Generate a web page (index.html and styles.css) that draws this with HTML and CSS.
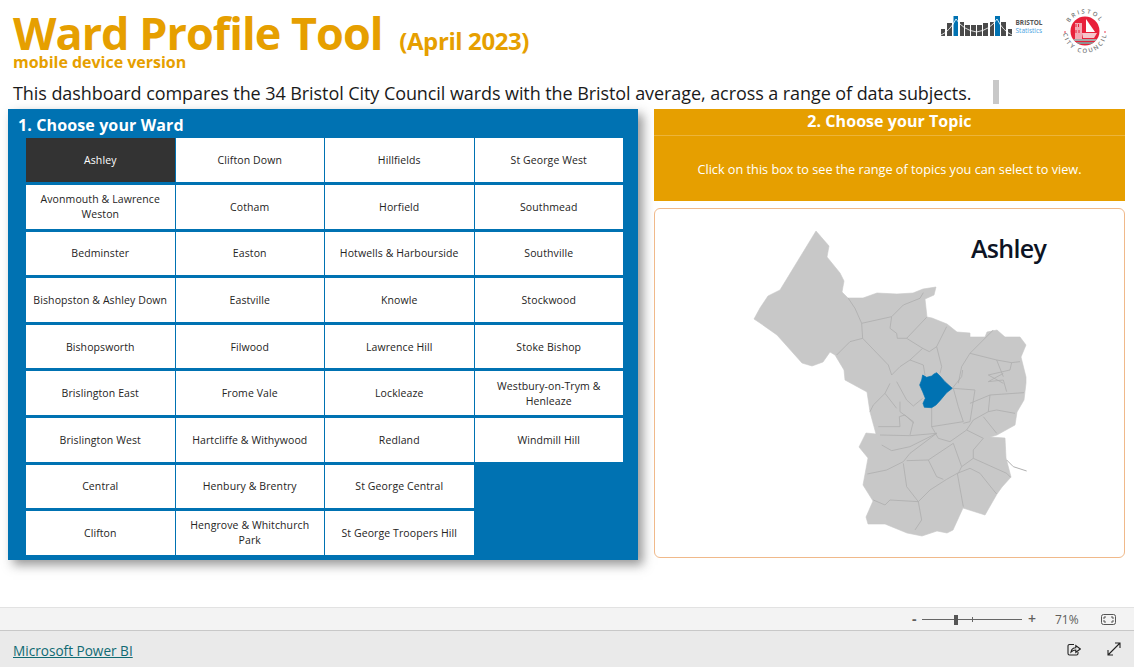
FILE: index.html
```html
<!DOCTYPE html>
<html lang="en">
<head>
<meta charset="utf-8">
<title>Ward Profile Tool</title>
<link rel="stylesheet" href="styles.css">
</head>
<body>
<div class="report">
  <header class="head">
    <div class="title-row">
      <div class="titles">
        <h1 class="title">Ward Profile Tool <span class="date">(April 2023)</span></h1>
        <div class="subtitle">mobile device version</div>
      </div>
      <div class="logos">
        <div class="stats-logo">
          <svg class="stats-bars" width="71" height="20" viewBox="0 0 71 20">
            <g fill="#4a4a4a">
              <rect x="0" y="13" width="4" height="7"/><rect x="6" y="7" width="5" height="13"/>
              <rect x="19" y="6" width="4" height="14"/><rect x="24" y="9" width="5" height="11"/><rect x="30" y="9" width="5" height="11"/><rect x="36" y="9" width="5" height="11"/><rect x="42" y="7" width="5" height="13"/><rect x="49" y="6" width="4" height="14"/>
              <rect x="60" y="6" width="5" height="14"/><rect x="67" y="13" width="4" height="7"/>
            </g>
            <g fill="#0072b2">
              <rect x="12.500" y="0" width="4.500" height="20"/><rect x="54" y="0" width="5" height="20"/>
            </g>
            <path d="M0 19 Q9 15 15 3 Q22 14 35.500 16 Q49 14 56 3 Q62 15 71 19" fill="none" stroke="#fff" stroke-width=".8"/>
          </svg>
          <div class="stats-text"><span class="stats-b">BRISTOL</span><span class="stats-s">Statistics</span></div>
        </div>
        <svg class="council" width="46" height="46" viewBox="0 0 46 46">
          <defs>
            <path id="ring-top" d="M5.500 23 A17.500 17.500 0 0 1 40.500 23"/>
            <path id="ring-bottom" d="M1 23 A22 22 0 0 0 45 23"/>
            <clipPath id="disc"><circle cx="23" cy="23" r="14.500"/></clipPath>
          </defs>
          <circle cx="23" cy="23" r="14.500" fill="#e8203a"/>
          <g clip-path="url(#disc)">
            <path d="M13 15 H20 V32 H13 Z" fill="#f3a9b4"/>
            <path d="M14 16 V19 M16.500 16 V19 M14 22 V25 M17 22 V25" stroke="#e8203a" stroke-width="1"/>
            <path d="M24 11 L33 24 H24 Z" fill="#fff"/>
            <path d="M20 25 H35 L32 30 H21 Z" fill="#f6c6cc"/>
            <rect x="9" y="31" width="28" height="2" fill="#a8a8a8"/>
            <rect x="9" y="34" width="28" height="2" fill="#8f8f8f"/>
          </g>
          <circle cx="3" cy="24" r=".8" fill="#e8203a"/><circle cx="43" cy="24" r=".8" fill="#e8203a"/>
          <text class="ring-text"><textPath href="#ring-top" startOffset="50%">BRISTOL</textPath></text>
          <text class="ring-text"><textPath href="#ring-bottom" startOffset="50%">CITY COUNCIL</textPath></text>
        </svg>
      </div>
    </div>
    <div class="intro-row">
      <p class="intro">This dashboard compares the 34 Bristol City Council wards with the Bristol average, across a range of data subjects.</p>
      <div class="scroll-mark"></div>
    </div>
  </header>

  <main class="main">
    <section class="ward-panel">
      <h2 class="ward-title">1. Choose your Ward</h2>
      <div class="ward-grid">
        <div class="ward selected">Ashley</div>
        <div class="ward">Avonmouth &amp; Lawrence Weston</div>
        <div class="ward">Bedminster</div>
        <div class="ward">Bishopston &amp; Ashley Down</div>
        <div class="ward">Bishopsworth</div>
        <div class="ward">Brislington East</div>
        <div class="ward">Brislington West</div>
        <div class="ward">Central</div>
        <div class="ward">Clifton</div>
        <div class="ward">Clifton Down</div>
        <div class="ward">Cotham</div>
        <div class="ward">Easton</div>
        <div class="ward">Eastville</div>
        <div class="ward">Filwood</div>
        <div class="ward">Frome Vale</div>
        <div class="ward">Hartcliffe &amp; Withywood</div>
        <div class="ward">Henbury &amp; Brentry</div>
        <div class="ward">Hengrove &amp; Whitchurch Park</div>
        <div class="ward">Hillfields</div>
        <div class="ward">Horfield</div>
        <div class="ward">Hotwells &amp; Harbourside</div>
        <div class="ward">Knowle</div>
        <div class="ward">Lawrence Hill</div>
        <div class="ward">Lockleaze</div>
        <div class="ward">Redland</div>
        <div class="ward">St George Central</div>
        <div class="ward">St George Troopers Hill</div>
        <div class="ward">St George West</div>
        <div class="ward">Southmead</div>
        <div class="ward">Southville</div>
        <div class="ward">Stockwood</div>
        <div class="ward">Stoke Bishop</div>
        <div class="ward">Westbury-on-Trym &amp; Henleaze</div>
        <div class="ward">Windmill Hill</div>
      </div>
    </section>

    <div class="right-col">
      <section class="topic">
        <h2 class="topic-title">2. Choose your Topic</h2>
        <p class="topic-text">Click on this box to see the range of topics you can select to view.</p>
      </section>
      <section class="map-card">
        <div class="map-name">Ashley</div>
        <svg class="map" viewBox="654 208 471 350">
          <path class="land" d="M816 231 829 246 827 257 840 273 844 281 842 292 848 298 863 298 877 293 897 294 913 293 923 289 936 287 934 295 925 299 927 317 932 318 947 324 957 332 970 333 970 337 985 337 987 332 997 330 1005 337 1020 337 1026 345 1021 357 1026 377 1026 383 1024 400 1017 412 1015 425 997 435 990 437 1005 438 1006 458 1011 477 1002 487 997 494 985 515 963 508 953 530 947 533 937 531 922 536 907 533 885 524 868 524 866 517 873 501 863 485 868 458 859 447 866 433 876 434 870 412 867 392 845 380 844 370 835 355 830 352 823 362 812 366 802 363 777 335 760 323 754 319 760 308 768 296 780 290Z"/>
          <g class="borders" transform="translate(740 220) scale(.3333)">
            <path d="M325 235 345 265 365 310 455 290M365 310 368 355 445 435 455 465M368 355 330 365 290 405M455 290 450 325 470 340 472 355 500 355 560 292M500 355 548 385 568 395 590 380 605 440 600 460M590 380 620 320M548 385 510 420 480 440 455 465M455 290 490 255 540 235 550 218M510 420 550 435 555 465M690 400 665 440 655 490M760 330 690 400 770 420 790 470M770 420 815 428 840 425M815 428 810 450 745 465 790 490"/>
          </g>
          <g class="borders" transform="translate(740 370) scale(.3333)">
            <path d="M450 40 435 70 400 105 390 125M435 70 470 115M470 35 500 90 520 108 548 85M480 95 480 125 520 155 510 195M415 170 480 170 478 140 495 135 522 160M420 195 510 197 590 190M425 225 455 242 510 230 590 190M382 312 440 300 490 275 510 250 590 190M490 280 500 350 535 395 450 390 435 405 400 390M535 395 545 450 525 480M535 395 570 360 620 328 652 310 670 410M500 272 565 270 590 320 610 328M565 270 640 220 665 290 655 310M652 310 690 295 720 310 760 360 770 372M665 290 700 265 800 310 812 322M575 113 575 170 595 205 630 215 680 180 730 205 700 240 700 265M640 55 655 110 670 155 575 170M640 55 705 60 690 155 670 160M690 100 750 75 745 125 700 150 680 180M750 75 852 68M745 125 770 120 825 130M730 140 770 190M800 65 790 30 745 35 790 10M637 55 665 20 668 0"/>
            <path class="river" d="M800 270 820 290 860 303"/>
            <path class="selected-ward" d="M548 15 560 22 575 18 582 12 590 8 600 18 615 35 637 55 620 68 600 92 588 105 575 113 553 112 549 100 556 85 548 65 539 45 545 30Z"/>
          </g>
        </svg>
      </section>
    </div>
  </main>

  <div class="status">
    <div class="zoom-minus">-</div>
    <div class="slider"><span class="thumb"></span><span class="tick"></span></div>
    <div class="zoom-plus">+</div>
    <div class="pct">71%</div>
    <svg class="fit" width="15" height="11" viewBox="0 0 15 11"><rect x=".5" y=".5" width="14" height="10" rx="2" fill="none" stroke="#555"/><path d="M3 5V3H5M10 3H12V5M3 6V8H5M10 8H12V6" fill="none" stroke="#555"/></svg>
  </div>
  <footer class="foot">
    <a class="pbi" href="#">Microsoft Power BI</a>
    <div class="foot-icons">
      <svg width="14" height="13" viewBox="0 0 14 13"><path d="M7 1.500H2.500A1.500 1.500 0 0 0 1 3v7.500A1.500 1.500 0 0 0 2.500 12h7A1.500 1.500 0 0 0 11 10.500V9" fill="none" stroke="#222" stroke-width="1.100"/><path d="M4 9C4.500 6 6.300 4.800 8.800 4.800V2.500L13.300 6 8.800 9.300V7C6.800 7 5.400 7.700 4 9Z" fill="none" stroke="#222" stroke-width="1.100"/></svg>
      <svg width="14" height="14" viewBox="0 0 14 14"><path d="M1 13 13 1M8 1h5v5M1 8v5h5" fill="none" stroke="#222" stroke-width="1.100"/></svg>
    </div>
  </footer>
</div>
</body>
</html>
```
FILE: styles.css
```css
* { box-sizing: border-box; }
html, body { margin: 0; padding: 0; background: #fff; }
body { font-family: "Open Sans", "Noto Sans", "Liberation Sans", sans-serif; color: #1a1a1a; overflow: hidden; }
.report { width: 1134px; height: 667px; display: flex; flex-direction: column; }

.head { height: 109px; padding: 0 9px 0 13px; display: flex; flex-direction: column; }
.title-row { display: flex; justify-content: space-between; height: 79px; }
.title { margin: 0; height: 52px; font-size: 45px; line-height: 66px; font-weight: 700; color: #e69f00; letter-spacing: -1px; white-space: nowrap; }
.date { font-size: 24px; margin-left: 6px; letter-spacing: -.4px; }
.subtitle { margin-top: 0; font-size: 16px; line-height: 20px; font-weight: 700; color: #e69f00; letter-spacing: -.02px; }
.logos { display: flex; align-items: flex-start; padding: 8px 17.500px 0 0; gap: 19px; }
.stats-logo { display: flex; align-items: center; gap: 4px; padding-top: 8px; }
.stats-bars { display: block; }
.stats-text { display: flex; flex-direction: column; font-size: 6.500px; line-height: 8px; padding-top: 2px; }
.stats-b { font-weight: 700; color: #555; }
.stats-s { color: #4aa3df; }
.ring-text { font-size: 6px; font-weight: 600; fill: #777; letter-spacing: 1.900px; text-anchor: middle; }

.intro-row { display: flex; align-items: center; height: 26px; }
.intro { margin: 0; padding-top: 1px; font-size: 18px; line-height: 26px; color: #1a1a1a; letter-spacing: -.075px; white-space: nowrap; }
.scroll-mark { width: 6px; height: 24px; background: #c8c8c8; margin-left: 22px; }

.main { flex: 1; padding: 0 9px 0 8px; display: flex; gap: 16px; align-items: flex-start; min-height: 0; }
.ward-panel { width: 630px; height: 451px; background: #0072b2; padding: 0 15px 5px 18px; box-shadow: 5px 5px 10px rgba(50,50,50,.5); display: flex; flex-direction: column; }
.ward-title { margin: 0 0 0 -8px; height: 29.400px; font-size: 16px; line-height: 32px; font-weight: 700; color: #fff; letter-spacing: .12px; white-space: nowrap; }
.ward-grid { flex: 1; display: grid; grid-auto-flow: column; grid-template-rows: repeat(9, 43.600px); grid-template-columns: repeat(4, 148.500px); gap: 3px 1px; }
.ward { background: #fff; display: flex; align-items: center; justify-content: center; text-align: center; padding: 1px 5px 0; font-size: 10.500px; line-height: 15px; color: #252423; letter-spacing: .1px; }
.ward.selected { background: #333; color: #fff; }

.right-col { flex: 1; display: flex; flex-direction: column; gap: 7px; }
.topic { height: 92px; background: #e69f00; color: #fff; text-align: center; display: flex; flex-direction: column; }
.topic-title { margin: 0; height: 27px; font-size: 16px; line-height: 25px; font-weight: 700; border-bottom: 1px solid #ecb43a; letter-spacing: .05px; }
.topic-text { margin: 0; padding-top: 24px; font-size: 12.700px; line-height: 18px; }
.map-card { position: relative; height: 350px; border: 1px solid #f0b98a; border-radius: 6px; background: #fff; overflow: hidden; }
.map-name { position: absolute; left: 316px; top: 22px; font-size: 25px; line-height: 34px; font-weight: 600; color: #0d1424; letter-spacing: -.7px; }
.map { display: block; width: 471px; height: 350px; margin: -1px; }
.land { fill: #c8c8c8; stroke: #c8c8c8; stroke-width: .6; stroke-linejoin: round; }
.borders path { fill: none; stroke: #adadad; stroke-width: 2.400; stroke-linejoin: round; }
.borders .river { stroke: #b0b0b0; stroke-width: 3; }
.borders .selected-ward { fill: #0072b2; stroke: #0072b2; stroke-width: 2; }

.status { margin-top: auto; height: 23px; flex: none; background: #f3f3f3; border-top: 1px solid #e2e2e2; display: flex; align-items: center; justify-content: flex-end; padding-right: 18px; color: #605e5c; font-size: 12px; }
.zoom-minus { width: 6px; font-weight: 700; font-size: 14px; line-height: 14px; margin-right: 4px; }
.slider { position: relative; width: 100px; height: 1px; background: #666; }
.thumb { position: absolute; left: 32px; top: -4px; width: 4px; height: 10px; background: #555; }
.tick { position: absolute; left: 50px; top: -2px; width: 1px; height: 5px; background: #666; }
.zoom-plus { margin-left: 6px; font-size: 14px; line-height: 14px; width: 9px; font-weight: 600; }
.pct { margin-left: 18px; width: 24px; font-size: 12px; }
.fit { margin-left: 22px; }

.foot { height: 37px; flex: none; background: #eaeaea; border-top: 1px solid #c8c8c8; display: flex; align-items: center; justify-content: space-between; padding: 0 13px; }
.pbi { padding-top: 3px; font-size: 13.600px; font-weight: 400; color: #106a73; text-decoration: underline; }
.foot-icons { display: flex; align-items: center; gap: 26px; }
```
